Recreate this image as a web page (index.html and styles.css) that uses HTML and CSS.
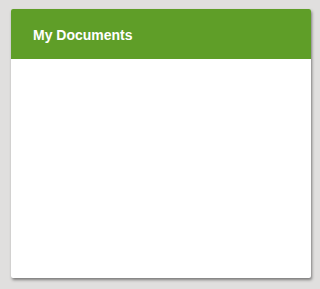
FILE: index.html
```html
<!DOCTYPE html>
<html>
<head>
<meta charset="utf-8">
<link rel="stylesheet" href="styles.css">
</head>
<body>
<div class="card">
  <div class="card-header"><h2 class="card-title">My Documents</h2></div>
  <div class="card-body"></div>
</div>
</body>
</html>
```
FILE: styles.css
```css
html, body { margin: 0; padding: 0; }
body {
  background: #e0dfde;
  width: 320px;
  height: 289px;
  padding: 9px 0 0 11px;
  box-sizing: border-box;
  font-family: "Liberation Sans", Arial, sans-serif;
}
.card {
  width: 300px;
  height: 269px;
  background: #fff;
  border-radius: 2px;
  box-shadow: 1px 2px 3px rgba(0,0,0,0.45);
  overflow: hidden;
  display: flex;
  flex-direction: column;
}
.card-header {
  background: #5f9e28;
  height: 50px;
  box-sizing: border-box;
  display: flex;
  align-items: center;
  padding: 2px 0 0 22px;
}
.card-title {
  margin: 0;
  color: #fff;
  font-size: 14px;
  font-weight: bold;
}
.card-body { flex: 1; }
```
